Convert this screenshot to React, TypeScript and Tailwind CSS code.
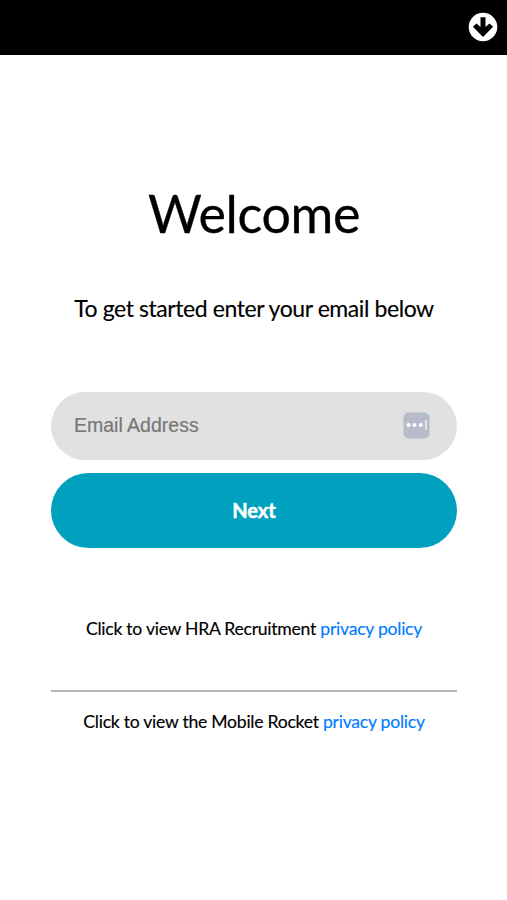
import { useState } from 'react';

const policies = [
  { id: 'hra', text: 'Click to view HRA Recruitment' },
  { id: 'rocket', text: 'Click to view the Mobile Rocket' },
];

function ArrowDownCircle() {
  return (
    <svg width="30" height="30" viewBox="0 0 30 30">
      <circle cx="15" cy="15" r="14.3" fill="#fff" />
      <path d="M12.5 5.2h5v9.8l4-3.6 3.6 3.4L15 25 4.9 14.8l3.6-3.4 4 3.6z" fill="#000" />
    </svg>
  );
}

function PolicyLine({ text }: { text: string }) {
  return (
    <p className="text-center text-[17.6px] leading-6 tracking-[-0.26px] whitespace-nowrap [-webkit-text-stroke:0.15px]">
      {text}{' '}
      <a href="#" className="text-[#007bff]">privacy policy</a>
    </p>
  );
}

export default function App() {
  const [email, setEmail] = useState('');

  return (
    <div className="min-h-[900px] bg-white text-black font-[Lato,sans-serif]">
      <header className="flex h-[54.5px] items-center justify-end bg-black pr-[9px]">
        <button type="button" aria-label="Download" className="cursor-pointer text-white">
          <ArrowDownCircle />
        </button>
      </header>

      <main className="pr-[50px] pl-[51px] pt-[126.5px]">
        <h1 className="text-center text-[52px] leading-[64px] tracking-[-0.4px] [-webkit-text-stroke:0.3px]">
          Welcome
        </h1>
        <p className="mt-[47px] text-center text-[23px] leading-8 tracking-[-0.42px] whitespace-nowrap [-webkit-text-stroke:0.15px]">
          To get started enter your email below
        </p>

        <form className="mt-[67.7px]" onSubmit={(e) => e.preventDefault()}>
          <div className="flex h-[68.6px] items-center rounded-full bg-[#e1e1e1] pl-[23px] pr-[27px]">
            <input
              type="email"
              value={email}
              onChange={(e) => setEmail(e.target.value)}
              placeholder="Email Address"
              className="min-w-0 flex-1 bg-transparent font-['Liberation_Sans',sans-serif] text-[19.5px] outline-none placeholder:text-[#777] [-webkit-text-stroke:0.2px]"
            />
            <svg width="27" height="27" viewBox="0 0 27 27">
              <rect x="0.5" y="0.5" width="26" height="26" rx="5" fill="#b7bccb" />
              <circle cx="5.5" cy="13" r="2" fill="#fff" />
              <circle cx="11.5" cy="13" r="2" fill="#fff" />
              <circle cx="17.7" cy="13" r="2" fill="#fff" />
              <rect x="22" y="8" width="2" height="10" fill="#e3e5ec" />
            </svg>
          </div>
          <button
            type="submit"
            className="mt-[12.4px] h-[75px] w-full cursor-pointer rounded-full bg-[#00a1be] text-[20px] font-bold text-white [-webkit-text-stroke:0.5px]"
          >
            Next
          </button>
        </form>

        <div className="mt-[69px]">
          <PolicyLine text={policies[0].text} />
          <hr className="mt-[49px] mb-[18px] border-t-2 border-[#b5b5b5]" />
          <PolicyLine text={policies[1].text} />
        </div>
      </main>
    </div>
  );
}
